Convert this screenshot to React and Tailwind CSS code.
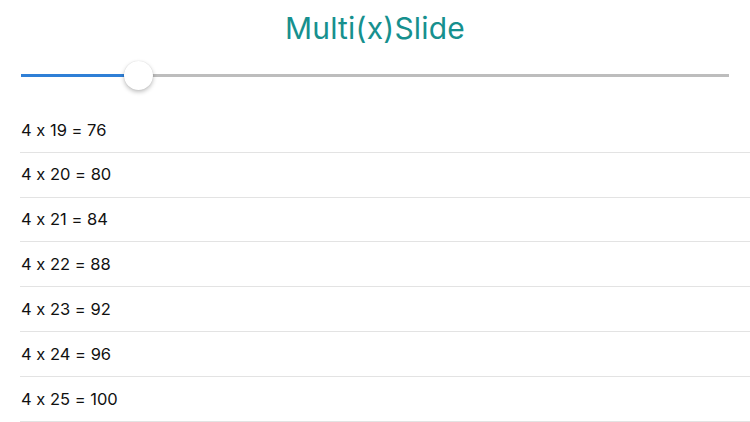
import React from "react";

const rows = [19, 20, 21, 22, 23, 24, 25];

export default function App() {
  return (
    <div className="w-[750px] h-[422px] bg-white overflow-hidden [font-feature-settings:'calt'_0]" style={{ fontFamily: "Inter, Roboto, sans-serif" }}>
      <div className="h-[56px] flex items-center justify-center">
        <h1 className="text-[30px] leading-none text-[#16908e] font-normal tracking-[0.2px]">Multi(x)Slide</h1>
      </div>
      <div className="h-[38px] flex items-center px-[21px]">
        <div className="relative w-full h-[3px] bg-[#bdbdbd]">
          <div className="absolute left-0 top-0 h-[3px] w-[110px] bg-[#2f7fd6]" />
          <div className="absolute left-[103px] top-[-13px] w-[29px] h-[29px] rounded-full bg-white shadow-[0_2px_4px_rgba(0,0,0,0.25),0_0_1px_rgba(0,0,0,0.15)]" />
        </div>
      </div>
      <div className="pt-[14px] pl-[20px]">
        {rows.map((n) => (
          <div key={n} className="h-[44.83px] flex items-center border-b border-[#e3e3e3] pl-[1px] text-[16.5px] text-[#111]">
            4 x {n} = {4 * n}
          </div>
        ))}
      </div>
    </div>
  );
}
